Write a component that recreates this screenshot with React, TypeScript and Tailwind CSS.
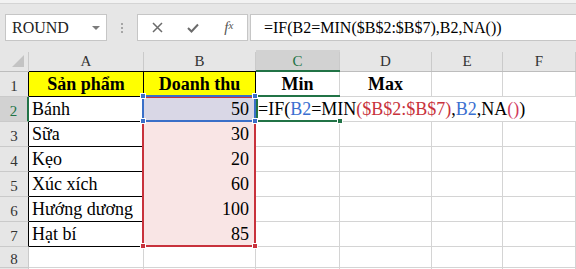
import React from "react";

const cols = ["A", "B", "C", "D", "E", "F"];

const products: [string, number][] = [
  ["Bánh", 50],
  ["Sữa", 30],
  ["Kẹo", 20],
  ["Xúc xích", 60],
  ["Hướng dương", 100],
  ["Hạt bí", 85],
];

function Formula() {
  return (
    <>
      <span>=IF(</span>
      <span className="text-[#3a6fd0]">B2</span>
      <span>=MIN</span>
      <span className="text-[#c8323c]">($B$2:$B$7)</span>
      <span>,</span>
      <span className="text-[#3a6fd0]">B2</span>
      <span>,NA</span>
      <span className="text-[#d23a5c]">()</span>
      <span>)</span>
    </>
  );
}

function RowHeader({ n, label = true }: { n: number; label?: boolean }) {
  if (n === 2) {
    return (
      <div className="bg-[#d2d2d2] border-r-2 border-r-[#217346] border-b border-b-[#cacaca] text-[#217346] text-[15px] flex items-center justify-center pt-[4px]">
        {n}
      </div>
    );
  }
  return (
    <div
      className={`bg-[#e6e6e6] border-b border-b-[#cacaca] border-r ${
        n <= 7 ? "border-r-black" : "border-r-[#cacaca]"
      } text-[#333] text-[15px] flex items-center justify-center pt-[4px]`}
    >
      {label ? n : null}
    </div>
  );
}

function EmptyCell({ noRight }: { noRight?: boolean }) {
  return (
    <div
      className={`bg-white border-b border-[#d4d4d4] ${noRight ? "" : "border-r"}`}
    />
  );
}

export default function App() {
  return (
    <div className="w-[576px] h-[269px] overflow-hidden bg-white font-['Liberation_Serif',serif] text-black">
      {/* formula bar */}
      <div className="h-[50px] bg-[#e6e6e6]">
        <div className="h-[4px] bg-[#f2f2f2] border-b border-[#d4d4d4]" />
        <div className="flex pt-[10px] pl-[5px]">
          <div className="w-[102px] h-[27px] bg-white border border-[#c6c6c6] flex items-center pl-[6px] text-[16px] text-[#222]">
            ROUND
            <div className="ml-auto mr-[6px] w-0 h-0 border-l-[4px] border-r-[4px] border-t-[4px] border-l-transparent border-r-transparent border-t-[#7b7b7b]" />
          </div>
          <div className="w-[30px] h-[27px] flex flex-col items-center justify-center gap-[2px]">
            <div className="w-[2px] h-[2px] bg-[#a6a6a6]" />
            <div className="w-[2px] h-[2px] bg-[#a6a6a6]" />
            <div className="w-[2px] h-[2px] bg-[#a6a6a6]" />
          </div>
          <div className="w-[111px] h-[27px] bg-white border border-[#c6c6c6] flex items-center">
            <div className="w-[37px] flex justify-center pl-[3px]">
              <svg width="11" height="11" viewBox="0 0 11 11">
                <path d="M1 1L10 10M10 1L1 10" stroke="#6b6b6b" strokeWidth="1.5" />
              </svg>
            </div>
            <div className="w-[37px] flex justify-center">
              <svg width="12" height="10" viewBox="0 0 12 10">
                <path d="M1 5L4.5 8.5L11 1.5" stroke="#6b6b6b" strokeWidth="2" fill="none" />
              </svg>
            </div>
            <div className="w-[37px] flex justify-center italic text-[15px] text-[#555] leading-none">
              f<span className="text-[11px]">x</span>
            </div>
          </div>
          <div className="flex-1 ml-[2px] h-[27px] bg-white border border-r-0 border-[#c6c6c6] flex items-center pl-[13px] text-[16px] whitespace-nowrap">
            =IF(B2=MIN($B$2:$B$7),B2,NA())
          </div>
        </div>
      </div>

      {/* sheet */}
      <div className="relative grid grid-cols-[29px_115px_112px_84px_92px_71px_1fr] grid-rows-[22px_repeat(7,25px)_21px_21px]">
        {/* header row */}
        <div className="bg-[#e6e6e6] border-b border-[#bdbdbd] pt-[2px]">
          <div className="h-full border-r border-[#cacaca] flex items-end justify-end pr-[3px] pb-[3px]">
            <svg width="13" height="13" viewBox="0 0 13 13">
              <polygon points="12,0 12,12 0,12" fill="#c3c3c3" />
            </svg>
          </div>
        </div>
        {cols.map((c) =>
          c === "C" ? (
            <div key={c} className="bg-[#d2d2d2] border-b-2 border-[#217346] pt-[2px]">
              <div className="h-full border-r border-[#cacaca] flex items-center justify-center text-[15px] text-[#217346]">
                {c}
              </div>
            </div>
          ) : (
            <div
              key={c}
              className={`bg-[#e6e6e6] border-b pt-[2px] ${
                c === "A" || c === "B" ? "border-black" : "border-[#bdbdbd]"
              }`}
            >
              <div className="h-full border-r border-[#cacaca] flex items-center justify-center text-[15px] text-[#333]">
                {c}
              </div>
            </div>
          )
        )}

        {/* row 1 */}
        <RowHeader n={1} />
        <div className="bg-[#ffff00] border-r border-b border-black text-center font-bold text-[18px] leading-[25px]">
          Sản phẩm
        </div>
        <div className="bg-[#ffff00] border-r border-b border-black text-center font-bold text-[18px] leading-[25px]">
          Doanh thu
        </div>
        <div className="border-r border-b border-[#d4d4d4] text-center font-bold text-[18px] leading-[25px]">
          Min
        </div>
        <div className="border-r border-b border-[#d4d4d4] text-center font-bold text-[18px] leading-[25px]">
          Max
        </div>
        <EmptyCell />
        <EmptyCell />

        {/* rows 2-7 */}
        {products.map(([name, value], i) => {
          const r = i + 2;
          return (
            <React.Fragment key={name}>
              <RowHeader n={r} />
              <div className="border-r border-b border-black pl-[3px] text-[18px] leading-[24px] whitespace-nowrap">
                {name}
              </div>
              <div
                className={`border-r border-b border-r-black text-right pr-[6px] text-[18px] leading-[24px] ${
                  r === 2
                    ? "bg-[#d9d7e6] border-b-[#d9d7e6]"
                    : "bg-[#f9e5e5] border-b-[#f9e5e5]"
                }`}
              >
                {value}
              </div>
              {r === 2 ? (
                <div className="relative z-10 border-b border-[#d4d4d4] pl-[2px] text-[18px] leading-[24px] whitespace-nowrap">
                  <Formula />
                </div>
              ) : (
                <EmptyCell />
              )}
              <EmptyCell noRight={r === 2} />
              <EmptyCell noRight={r === 2} />
              <EmptyCell noRight={r === 2} />
            </React.Fragment>
          );
        })}

        {/* rows 8-9 */}
        {[8, 9].map((r) => (
          <React.Fragment key={r}>
            <RowHeader n={r} label={r === 8} />
            <EmptyCell />
            <EmptyCell />
            <EmptyCell />
            <EmptyCell />
            <EmptyCell />
            <EmptyCell />
          </React.Fragment>
        ))}

        {/* reference range highlights */}
        <div className="absolute left-[142px] top-[46px] w-[114px] h-[151px] border-2 border-[#c8323c] z-20" />
        <div className="absolute left-[140px] top-[193px] w-[6px] h-[6px] bg-[#c8323c] border border-white z-30" />
        <div className="absolute left-[252px] top-[193px] w-[6px] h-[6px] bg-[#c8323c] border border-white z-30" />

        <div className="absolute left-[142px] top-[45px] w-[114px] h-[27px] border-2 border-[#3a6fc8] z-20" />
        <div className="absolute left-[140px] top-[43px] w-[6px] h-[6px] bg-[#3a6fc8] border border-white z-30" />
        <div className="absolute left-[252px] top-[43px] w-[6px] h-[6px] bg-[#3a6fc8] border border-white z-30" />
        <div className="absolute left-[140px] top-[68px] w-[6px] h-[6px] bg-[#3a6fc8] border border-white z-30" />
        <div className="absolute left-[252px] top-[68px] w-[6px] h-[6px] bg-[#3a6fc8] border border-white z-30" />

        {/* active cell C2 */}
        <div className="absolute left-[256px] top-[45px] w-[84px] h-[2px] bg-[#217346] z-20" />
        <div className="absolute left-[256px] top-[45px] w-[2px] h-[27px] bg-[#217346] z-20" />
        <div className="absolute left-[256px] top-[70px] w-[84px] h-[2px] bg-[#217346] z-20" />
        <div className="absolute left-[337px] top-[68px] w-[6px] h-[6px] bg-[#217346] border border-white z-30" />
      </div>
    </div>
  );
}
